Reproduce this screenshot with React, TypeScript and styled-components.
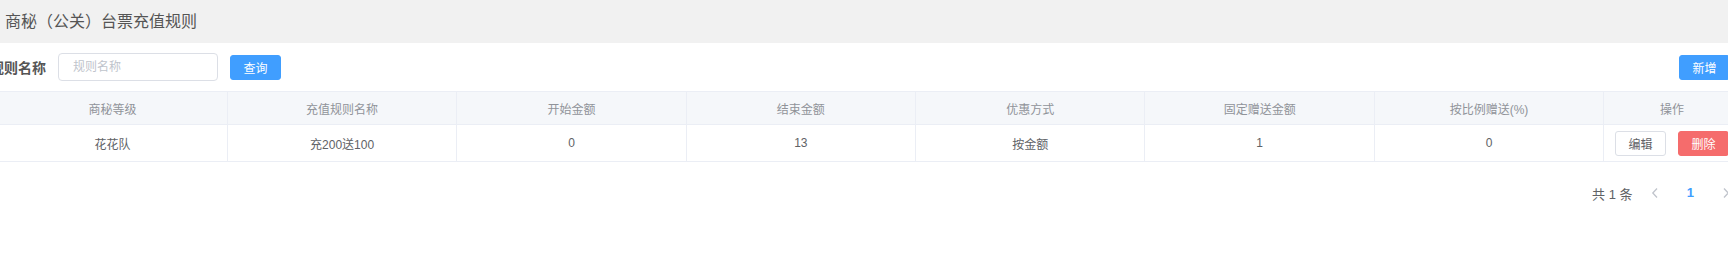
import styled, { createGlobalStyle } from "styled-components";

const GlobalStyle = createGlobalStyle`
  html, body {
    margin: 0;
    padding: 0;
    background: #fff;
    overflow: hidden;
  }
  body {
    font-family: "Liberation Sans", "Noto Sans CJK SC", sans-serif;
    color: #606266;
  }
`;

interface RuleRow {
  id: number;
  level: string;
  name: string;
  startAmount: number;
  endAmount: number;
  discountType: string;
  fixedGift: number;
  ratioGift: number;
}

const columns = [
  "商秘等级",
  "充值规则名称",
  "开始金额",
  "结束金额",
  "优惠方式",
  "固定赠送金额",
  "按比例赠送(%)",
  "操作",
];

const rows: RuleRow[] = [
  {
    id: 1,
    level: "花花队",
    name: "充200送100",
    startAmount: 0,
    endAmount: 13,
    discountType: "按金额",
    fixedGift: 1,
    ratioGift: 0,
  },
];

const App: React.FC = () => {
  return (
    <>
      <GlobalStyle />
      <PageHeader>
        <Title>商秘（公关）台票充值规则</Title>
      </PageHeader>
      <Content>
        <Toolbar>
          <SearchGroup>
            <Label>规则名称</Label>
            <SearchInput placeholder="规则名称" />
            <Button $kind="primary">查询</Button>
          </SearchGroup>
          <Button $kind="primary">新增</Button>
        </Toolbar>

        <Table>
          <colgroup>
            {columns.map((c, i) => (
              <Col key={c} $last={i === columns.length - 1} />
            ))}
          </colgroup>
          <thead>
            <tr>
              {columns.map((c) => (
                <Th key={c}>{c}</Th>
              ))}
            </tr>
          </thead>
          <tbody>
            {rows.map((row) => (
              <tr key={row.id}>
                <Td>{row.level}</Td>
                <Td>{row.name}</Td>
                <Td>{row.startAmount}</Td>
                <Td>{row.endAmount}</Td>
                <Td>{row.discountType}</Td>
                <Td>{row.fixedGift}</Td>
                <Td>{row.ratioGift}</Td>
                <Td>
                  <Actions>
                    <Button $kind="default">编辑</Button>
                    <Button $kind="danger">删除</Button>
                  </Actions>
                </Td>
              </tr>
            ))}
          </tbody>
        </Table>

        <Pagination>
          <Total>共 1 条</Total>
          <PageArrow disabled>
            <svg width="8" height="12" viewBox="0 0 8 12">
              <path d="M6 1.5 L1.8 6 L6 10.5" fill="none" stroke="currentColor" strokeWidth="1.3" />
            </svg>
          </PageArrow>
          <PageNumber $active>1</PageNumber>
          <PageArrow disabled>
            <svg width="8" height="12" viewBox="0 0 8 12">
              <path d="M2 1.5 L6.2 6 L2 10.5" fill="none" stroke="currentColor" strokeWidth="1.3" />
            </svg>
          </PageArrow>
        </Pagination>
      </Content>
    </>
  );
};

const PageHeader = styled.div({
  height: "43px",
  background: "#f1f1f1",
  display: "flex",
  alignItems: "center",
  paddingLeft: "5px",
  paddingBottom: "3px",
  boxSizing: "border-box",
});

const Title = styled.h2({
  margin: 0,
  fontSize: "16px",
  fontWeight: 400,
  color: "#555",
});

const Content = styled.div({
  width: "1743px",
  marginLeft: "-2px",
});

const Toolbar = styled.div({
  display: "flex",
  alignItems: "center",
  justifyContent: "space-between",
  padding: "10px 11px 10px 0",
  height: "28px",
});

const SearchGroup = styled.div({
  display: "flex",
  alignItems: "center",
});

const Label = styled.label({
  width: "60px",
  boxSizing: "border-box",
  paddingRight: "12px",
  textAlign: "right",
  whiteSpace: "nowrap",
  direction: "rtl",
  fontSize: "14px",
  fontWeight: 700,
  color: "#555",
});

const SearchInput = styled.input({
  width: "160px",
  height: "28px",
  boxSizing: "border-box",
  border: "1px solid #dcdfe6",
  borderRadius: "4px",
  padding: "0 14px",
  fontSize: "12px",
  fontFamily: "inherit",
  color: "#606266",
  outline: "none",
  marginRight: "12px",
  "&::placeholder": {
    color: "#c0c4cc",
  },
});

const buttonColors = {
  primary: { bg: "#409eff", border: "#409eff", color: "#fff" },
  danger: { bg: "#f56c6c", border: "#f56c6c", color: "#fff" },
  default: { bg: "#fff", border: "#dcdfe6", color: "#606266" },
};

const Button = styled.button<{ $kind: keyof typeof buttonColors }>`
  width: 51px;
  height: 25px;
  box-sizing: border-box;
  border-radius: 3px;
  border: 1px solid ${(p) => buttonColors[p.$kind].border};
  background: ${(p) => buttonColors[p.$kind].bg};
  color: ${(p) => buttonColors[p.$kind].color};
  font-size: 12px;
  font-family: inherit;
  padding: 0;
  cursor: pointer;
`;

const Table = styled.table({
  width: "100%",
  tableLayout: "fixed",
  borderCollapse: "collapse",
  fontSize: "12px",
});

const Col = styled.col<{ $last?: boolean }>`
  width: ${(p) => (p.$last ? "auto" : "229.4px")};
`;

const Th = styled.th({
  height: "32px",
  padding: 0,
  background: "#f5f7fa",
  color: "#909399",
  fontWeight: 400,
  textAlign: "center",
  borderTop: "1px solid #ebeef5",
  borderBottom: "1px solid #ebeef5",
  borderRight: "1px solid #ebeef5",
});

const Td = styled.td({
  height: "36px",
  padding: 0,
  color: "#606266",
  textAlign: "center",
  borderBottom: "1px solid #ebeef5",
  borderRight: "1px solid #ebeef5",
});

const Actions = styled.div({
  display: "flex",
  justifyContent: "center",
  gap: "12px",
});

const Pagination = styled.div({
  display: "flex",
  justifyContent: "flex-end",
  alignItems: "center",
  paddingTop: "17px",
  height: "28px",
  fontSize: "13px",
  color: "#606266",
});

const Total = styled.span({
  marginRight: "7px",
});

const PageArrow = styled.button({
  width: "30px",
  height: "28px",
  border: "none",
  background: "transparent",
  color: "#c0c4cc",
  padding: 0,
  display: "flex",
  alignItems: "center",
  justifyContent: "center",
});

const PageNumber = styled.span<{ $active?: boolean }>`
  min-width: 35.5px;
  height: 28px;
  margin: 0 3px;
  line-height: 28px;
  text-align: center;
  font-weight: 700;
  color: ${(p) => (p.$active ? "#409eff" : "#606266")};
`;

export default App;
